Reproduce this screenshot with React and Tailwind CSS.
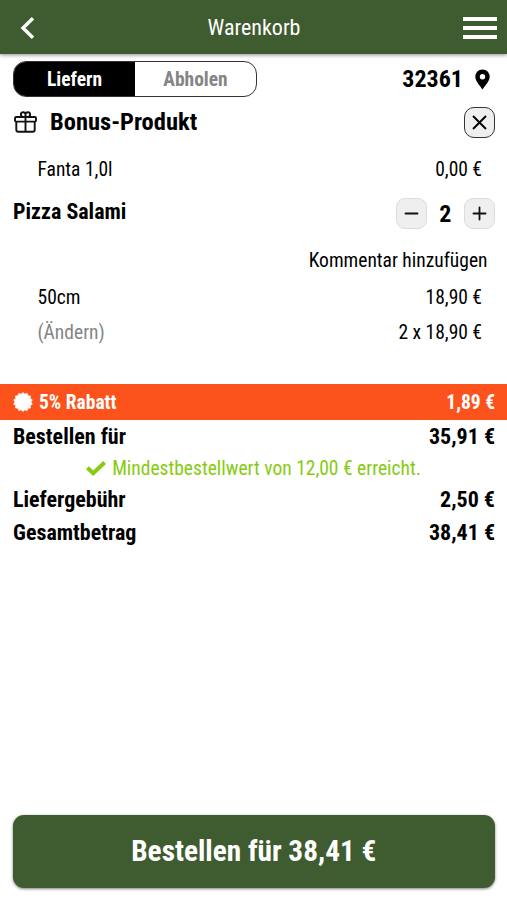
function Row({ className = "", children }) {
  return <div className={"flex items-center justify-between whitespace-nowrap " + className}>{children}</div>;
}

function GiftIcon() {
  return (
    <svg className="h-[22px] w-[23px]" viewBox="0 0 23 22" fill="none" stroke="#111" strokeWidth="1.9">
      <rect x="1" y="6" width="21" height="4.6" rx="1.2" />
      <path d="M2.3 10.6v8.2q0 2 2 2h14.4q2 0 2-2v-8.2M11.5 6v14.8" />
      <path d="M11.5 5.9H9a2.3 2.3 0 1 1 2.5-2.4zM11.5 5.9H14a2.3 2.3 0 1 0-2.5-2.4z" />
    </svg>
  );
}

function PinIcon() {
  return (
    <svg className="h-[21px] w-[15px]" viewBox="0 0 15 21">
      <path fillRule="evenodd" d="M7.5.4C3.4.4.3 3.6.3 7.6c0 4.8 4.4 8.7 7.2 13 2.8-4.300 7.200-8.200 7.200-13C14.700 3.600 11.600.4 7.500.4zM7.500 5a2.700 2.700 0 1 1 0 5.400a2.700 2.700 0 0 1 0-5.400z" />
    </svg>
  );
}

const SEAL_POINTS = Array.from({ length: 28 }, (_, i) => {
  const radius = i % 2 ? 8 : 9.6;
  const angle = (i * Math.PI) / 14;
  return `${(10 + radius * Math.sin(angle)).toFixed(2)},${(10 - radius * Math.cos(angle)).toFixed(2)}`;
}).join(" ");

function SealIcon() {
  return (
    <svg className="-mt-px size-[20px]" viewBox="0 0 20 20" fill="#fff" stroke="#fff" strokeWidth=".6" strokeLinejoin="round">
      <polygon points={SEAL_POINTS} />
    </svg>
  );
}

function CheckIcon() {
  return (
    <svg className="h-[15px] w-[20px]" viewBox="0 0 20 15" fill="none" stroke="#86cb11" strokeWidth="4">
      <path d="M1.400 6.800L7.200 12.200L18.600 1.500" />
    </svg>
  );
}

function StepButton({ plus }) {
  return (
    <button className="flex size-[31px] items-center justify-center rounded-[9px] border border-[#dcdcdc] bg-[#efefef]">
      <svg className="size-[15px]" viewBox="0 0 15 15" stroke="#111" strokeWidth="1.8" strokeLinecap="round">
        <path d={plus ? "M1.500 7.500h12M7.500 1.500v12" : "M1.500 7.500h12"} />
      </svg>
    </button>
  );
}

export default function App() {
  return (
    <div className="flex h-[900px] w-[507px] flex-col overflow-hidden bg-white text-[19.5px] leading-none text-black [font-family:'Roboto_Condensed',Roboto,sans-serif] [font-stretch:75%]">
      <header className="flex h-[54px] shrink-0 items-center justify-between bg-[#3f5b30] pt-[2px] pr-[10px] pl-[20px] text-white shadow-[0_1px_4px_rgba(0,0,0,0.45)]">
        <svg className="h-[22px] w-[25px]" viewBox="0 0 25 22" fill="none" stroke="#fff" strokeWidth="3.4">
          <path d="M13 1.200L3 11l10 9.800" />
        </svg>
        <h1 className="text-[22px]">Warenkorb</h1>
        <svg className="h-[24px] w-[34px]" viewBox="0 0 34 24" fill="#fff">
          <path d="M0 1h34v4H0zM0 10h34v4H0zM0 19h34v4H0z" />
        </svg>
      </header>

      <Row className="mt-[7px] h-[36px] shrink-0 pr-[17px] pl-[13px] font-bold">
        <div className="flex h-[36px] w-[244px] overflow-hidden rounded-[13px] border border-[#333]">
          <div className="flex w-[121px] items-center justify-center bg-black pt-[2px] text-white">Liefern</div>
          <div className="flex flex-1 items-center justify-center pt-[2px] text-[#858585]">Abholen</div>
        </div>
        <div className="flex items-center gap-[12px] text-[24px]">
          <span>32361</span>
          <PinIcon />
        </div>
      </Row>

      <Row className="h-[50px] shrink-0 pr-[12px] pl-[14px]">
        <div className="flex items-center gap-[13px] text-[24.5px] font-bold">
          <GiftIcon />
          <h2>Bonus-Produkt</h2>
        </div>
        <button className="flex size-[31px] items-center justify-center rounded-[10px] border border-[#333] bg-[#efefef]">
          <svg className="size-[15px]" viewBox="0 0 15 15" stroke="#000" strokeWidth="1.9">
            <path d="M1 1l13 13M14 1l-13 13" />
          </svg>
        </button>
      </Row>
      <Row className="h-[44px] shrink-0 pt-px pr-[25px] pl-[37.5px]">
        <span>Fanta 1,0l</span>
        <span>0,00 €</span>
      </Row>
      <Row className="h-[45px] shrink-0 pr-[12px] pl-[13px] font-bold">
        <h2 className="pb-[3px] text-[22px]">Pizza Salami</h2>
        <div className="flex items-center gap-[12.500px]">
          <StepButton />
          <span className="text-[24px]">2</span>
          <StepButton plus />
        </div>
      </Row>
      <Row className="h-[48px] shrink-0 !justify-end pt-[2px] pr-[19.500px]">
        <span>Kommentar hinzufügen</span>
      </Row>
      <Row className="h-[26px] shrink-0 pt-[2px] pr-[25px] pl-[37.5px]">
        <span>50cm</span>
        <span>18,90 €</span>
      </Row>
      <Row className="h-[44px] shrink-0 pt-[2px] pr-[25px] pl-[37.5px]">
        <span className="text-[#858585]">(Ändern)</span>
        <span>2 x 18,90 €</span>
      </Row>

      <Row className="mt-[29.5px] h-[36px] shrink-0 bg-[#fc531d] pt-[2px] pr-[12px] pl-[13px] font-bold text-white">
        <div className="flex items-center gap-[6px]">
          <SealIcon />
          <span>5% Rabatt</span>
        </div>
        <span>1,89 €</span>
      </Row>
      <Row className="h-[34px] shrink-0 pt-px pr-[12px] pl-[13px] text-[22px] font-bold">
        <span>Bestellen für</span>
        <span>35,91 €</span>
      </Row>
      <Row className="h-[29px] shrink-0 !justify-center gap-[6px] pt-px text-[#86cb11]">
        <CheckIcon />
        <span>Mindestbestellwert von 12,00 € erreicht.</span>
      </Row>
      <Row className="h-[33px] shrink-0 pt-px pr-[12px] pl-[13px] text-[22px] font-bold">
        <span>Liefergebühr</span>
        <span>2,50 €</span>
      </Row>
      <Row className="h-[33px] shrink-0 pt-px pr-[12px] pl-[13px] text-[22px] font-bold">
        <span>Gesamtbetrag</span>
        <span>38,41 €</span>
      </Row>

      <button className="mr-[12.500px] ml-[13px] mt-auto mb-[12px] flex h-[73px] shrink-0 items-center justify-center rounded-[11px] bg-[#3f5b30] pt-px text-[29.3px] font-bold text-white shadow-[0_1px_3px_rgba(0,0,0,0.5)]">
        Bestellen für 38,41 €
      </button>
    </div>
  );
}
